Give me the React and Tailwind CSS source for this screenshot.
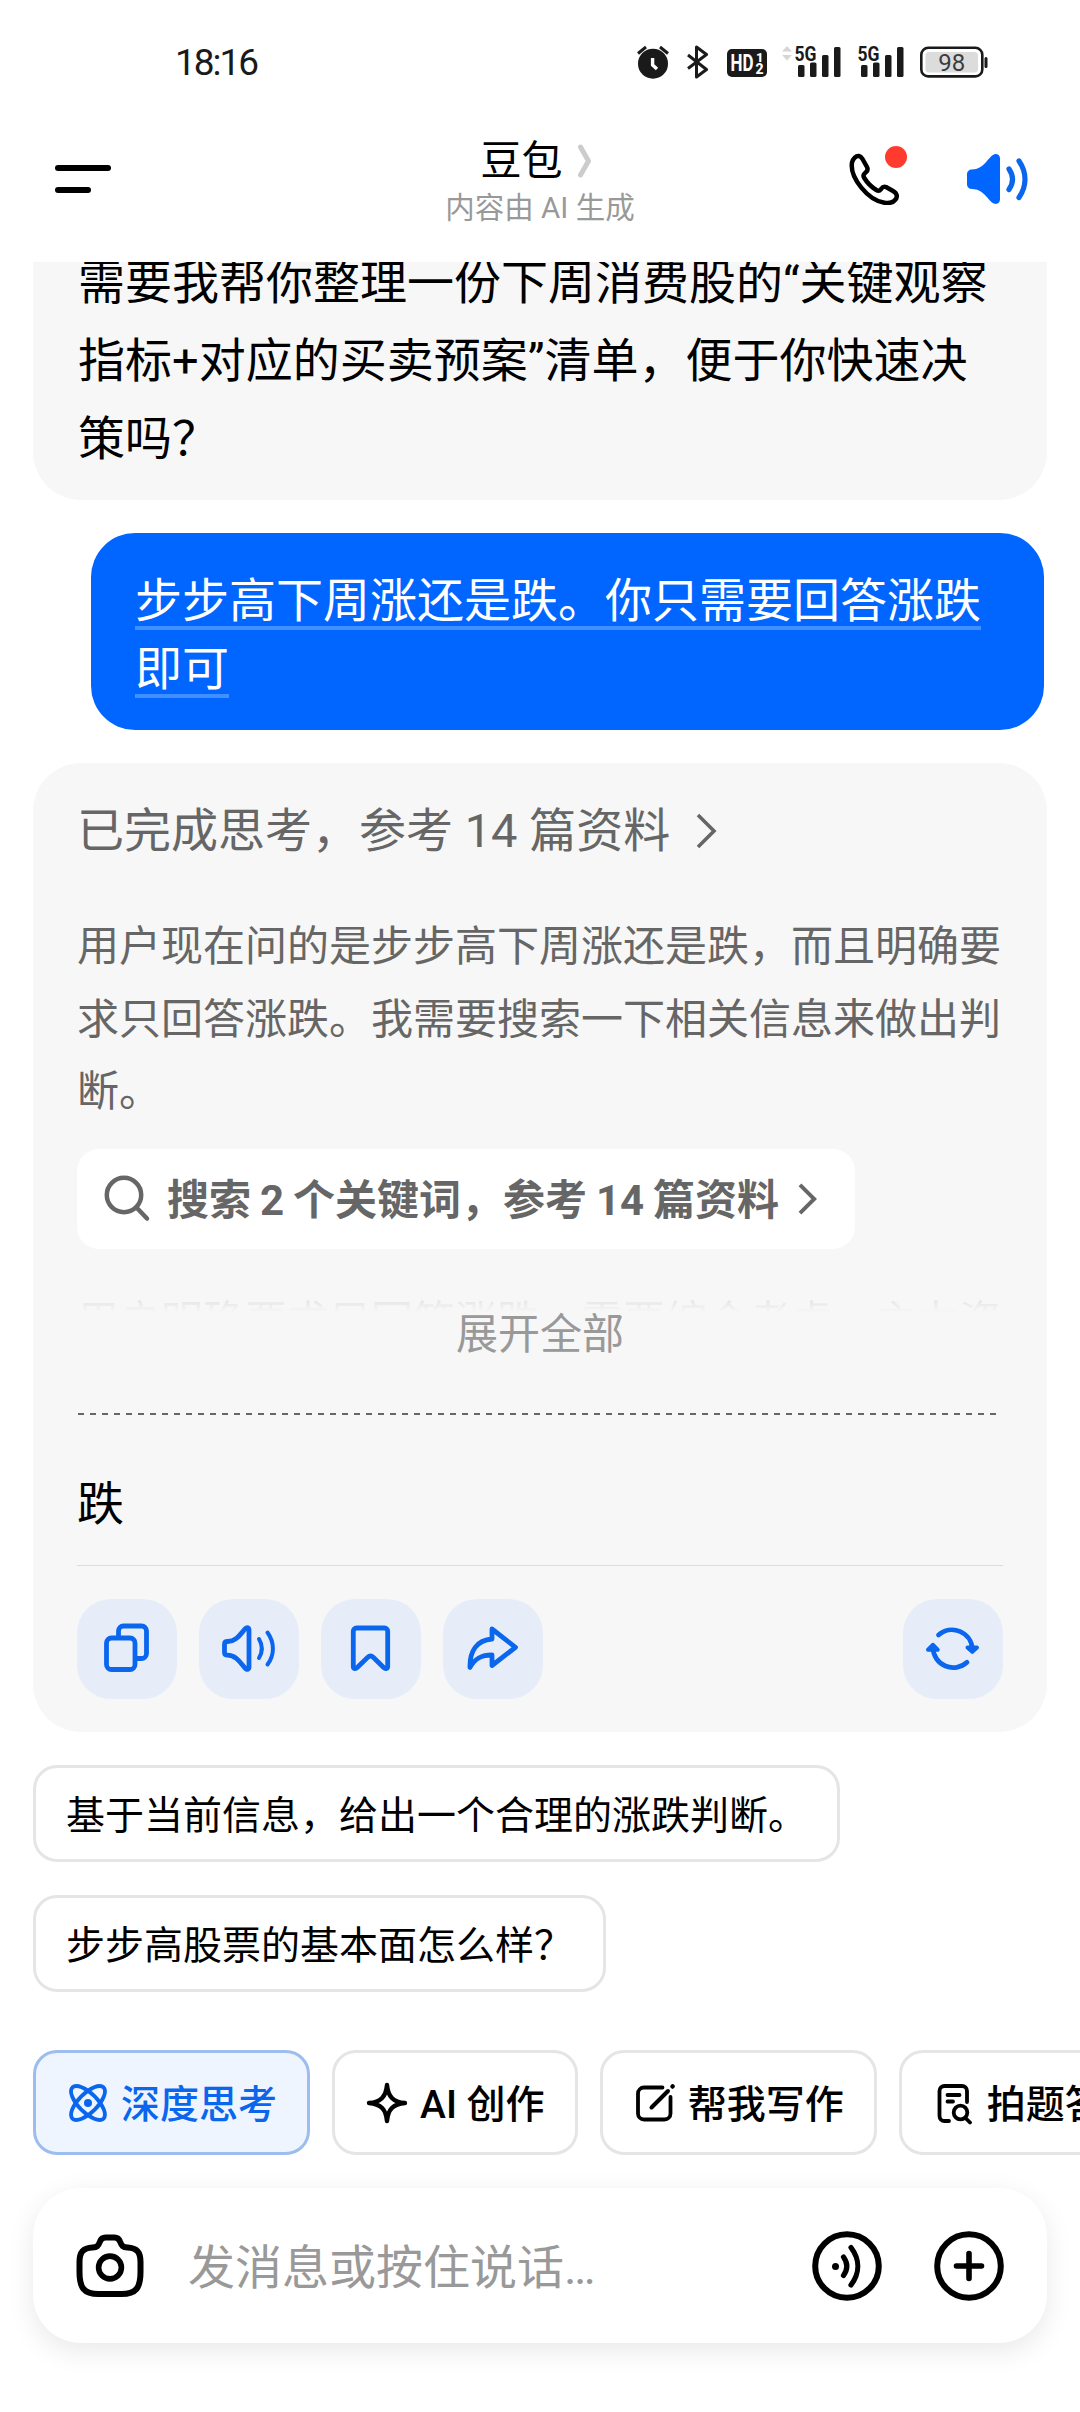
const BLUE = "#0b66ee";

const SignalIcon = () => (
  <svg className="overflow-visible" width="48" height="34" viewBox="0 0 48 34" fill="#1a1a1a">
    <text x="0.5" y="16" fontSize="21" fontWeight="700" textLength="22" lengthAdjust="spacingAndGlyphs">
      5G
    </text>
    <rect x="4" y="20" width="6.5" height="12" rx="1.5" />
    <rect x="16" y="17.5" width="6.5" height="14.5" rx="1.5" />
    <rect x="28" y="10" width="6.5" height="22" rx="1.5" />
    <rect x="40" y="2" width="6.5" height="30" rx="1.5" />
  </svg>
);

const StatusBar = () => (
  <div className="flex h-[124px] shrink-0 items-center justify-between pr-[92px] pl-[175px] text-[#1a1a1a]">
    <span className="text-[37px] leading-none tracking-[-2px]">18:16</span>
    <div className="flex items-center">
      {/* alarm */}
      <svg width="32" height="34" viewBox="0 0 32 34" fill="none" stroke="#1a1a1a" strokeWidth="3">
        <circle cx="16" cy="18.7" r="15" fill="#1a1a1a" stroke="none" />
        <path d="M1 8.5l8-6.5M31 8.5L23 2" />
        <path d="M15.6 13v7l4.4 4" stroke="#fff" strokeWidth="3.4" />
      </svg>
      {/* bluetooth */}
      <svg className="ml-[17px]" width="24" height="34" viewBox="0 0 24 34" fill="none" stroke="#1a1a1a" strokeWidth="3" strokeLinejoin="round">
        <path d="M2 10l18.5 14.5L10.5 32V2l10 7.5L2 23.5" />
      </svg>
      {/* HD voice */}
      <svg className="ml-[17px]" width="40" height="34" viewBox="0 0 40 34" fill="#fff">
        <rect x="0" y="4" width="40" height="28" rx="5" fill="#1a1a1a" />
        <text x="3.5" y="26" fontSize="23" fontWeight="700" textLength="23" lengthAdjust="spacingAndGlyphs">HD</text>
        <text x="29" y="17" fontSize="13" fontWeight="800">1</text>
        <text x="28.5" y="29" fontSize="14" fontWeight="800">2</text>
      </svg>
      <svg className="ml-[15px]" width="10" height="34" viewBox="0 0 10 34" fill="#d6d6d6">
        <path d="M0 6.5L5 1l5 5.5zM0 10l5 5.5 5-5.5z" />
      </svg>
      <div className="ml-[2px] flex gap-[15px]">
        <SignalIcon />
        <SignalIcon />
      </div>
      {/* battery */}
      <svg className="ml-[15px]" width="68" height="34" viewBox="0 0 68 34">
        <rect x="1.3" y="2.8" width="61" height="28.6" rx="7" fill="none" stroke="#1a1a1a" strokeWidth="2.6" />
        <rect x="5.5" y="7" width="52.5" height="20.5" rx="3.5" fill="#dcdcdc" />
        <rect x="64.5" y="12" width="3" height="11" rx="1.5" fill="#1a1a1a" />
        <text x="31.7" y="26" fontSize="24" textAnchor="middle" fill="#3c3c3c">98</text>
      </svg>
    </div>
  </div>
);

const Header = () => (
  <header className="grid h-[138px] shrink-0 grid-cols-[1fr_auto_1fr] items-start px-[50px]">
    <div className="flex flex-col gap-4 pt-[41px] pl-[5px]">
      <span className="h-[6px] w-14 rounded-full bg-black" />
      <span className="h-[6px] w-9 rounded-full bg-black" />
    </div>
    <div className="flex flex-col items-center pt-3">
      <div className="flex items-center gap-3.5 pr-[7px] text-[41px] leading-[50px] text-black">
        豆包
        <svg width="16" height="34" viewBox="0 0 16 34" fill="none" stroke="#cccccc" strokeWidth="5" strokeLinecap="round" strokeLinejoin="round">
          <path d="M3.5 3l8 14-8 14" />
        </svg>
      </div>
      <p className="text-[29.5px] leading-[44px] text-[#999999]">内容由 AI 生成</p>
    </div>
    <div className="flex items-start justify-end gap-[66px] pt-[26px]">
      <div className="relative pt-[3px]">
        <svg width="52" height="52" viewBox="0 0 52 52" fill="none" stroke="#000" strokeWidth="4.5" strokeLinejoin="round">
          <path d="M4 9.500C5 5.500 8 2.500 11 3c1.500.3 2.500 1.500 3.500 3l4.500 8c1.200 2.300.5 3.800-1 5.200-2.700 2.500-3.200 3.300-1.700 5.800 3 5 8 9.500 12 12 2.300 1.400 3.200 1 4.500-.7 1.600-2.100 2.700-3.300 5.200-2.300l7 4c4.500 2.600 4.500 6 2.500 8.500-2.300 3-6.500 4-11 3.300C20.500 47.500 1.500 25 4 9.500z" />
        </svg>
        <span className="absolute -top-[4px] left-[37px] size-[22px] rounded-full bg-[#ff3b30]" />
      </div>
      <svg className="mt-[3px]" width="64" height="52" viewBox="0 0 64 52" fill="none">
        <path d="M6 16.500C18 16.500 22 4 28 1.500c3-1.200 6 .5 6 4v41c0 3.500-3 5.200-6 4C22 48 18 36 6 36c-3 0-5-2-5-4.500v-10c0-3 2-5 5-5z" fill="#0066ff" />
        <path d="M43 16c4.500 6.500 4.500 14 0 20.500M53 8c8 11.500 8 25 0 36.500" stroke="#0b66ee" strokeWidth="5.2" strokeLinecap="round" />
      </svg>
    </div>
  </header>
);

const Chevron = ({ className, width = 3.6 }) => (
  <svg className={className} width="22" height="36" viewBox="0 0 22 36" fill="none" stroke="#666666" strokeWidth={width}>
    <path d="M2 2l16 16L2 34" />
  </svg>
);

const actionIcons = {
  copy: (
    <>
      <path d="M41.5 37v-5a5 5 0 0 1 5-5h18a5 5 0 0 1 5 5v22.500a5 5 0 0 1-5 5H60" />
      <rect x="29.5" y="39" width="28.5" height="31.5" rx="5" />
    </>
  ),
  speaker: (
    <>
      <path d="M28.5 42.500C38 42.500 42 34 46.500 29.500c1.500-1.500 3.500-.8 3.500 1.500v37c0 2.300-2 3-3.500 1.500C42 65 38 56.200 28.500 56.200c-2 0-3-1-3-3v-7.700c0-2 1-3 3-3z" />
      <path d="M60 40c3.600 6 3.600 13 0 19M68.500 33.500c7.200 10 7.200 22.500 0 32" strokeWidth="4" />
    </>
  ),
  bookmark: (
    <path d="M35.5 29h28a3.200 3.200 0 0 1 3.200 3.200v35c0 2.600-2.200 3.200-3.800 1.500L52.500 58.500q-3-2.800-6 0L36 68.700c-1.600 1.700-3.700 1.100-3.700-1.500v-35a3.200 3.200 0 0 1 3.200-3.200z" />
  ),
  share: (
    <path d="M27 68.500C26.500 52 34 41 49 40V30l23.500 18.300L49 66.500V56c-10 0-17 3-22 12.500z" />
  ),
  refresh: (
    <>
      <path d="M35.5 36A20.300 20.300 0 0 1 69.300 50M64 63.300A20.300 20.300 0 0 1 30 49" />
      <path d="M64.500 48.500l4.800 4.400 4.700-4.400zM25 50.700l5-4.900 4.700 4.900z" fill={BLUE} strokeWidth="4" />
    </>
  ),
};

const ActionButton = ({ name }) => (
  <button className="size-[100px] rounded-[34px] bg-[#e6edf8]">
    <svg width="100" height="100" viewBox="0 0 100 100" fill="none" stroke={BLUE} strokeWidth="4.8" strokeLinecap="round" strokeLinejoin="round">
      {actionIcons[name]}
    </svg>
  </button>
);

const AnswerCard = () => (
  <section className="mx-[33px] mt-[33px] h-[969px] rounded-[48px] bg-[#f7f7f7] px-11 pt-[33px]">
    <div className="flex h-[70px] items-center text-[47px] whitespace-nowrap text-[#666666]">
      已完成思考，参考 14 篇资料
      <Chevron className="ml-[26px]" />
    </div>
    <p className="mt-[45px] text-[42px] leading-[72.5px] whitespace-nowrap text-[#666666]">
      用户现在问的是步步高下周涨还是跌，而且明确要
      <br />
      求只回答涨跌。我需要搜索一下相关信息来做出判
      <br />
      断。
    </p>
    <div className="mt-5 flex h-[100px] w-[778px] items-center rounded-[22px] bg-white pl-[27px] text-[42px] font-bold whitespace-nowrap text-[#666666]">
      <svg className="mr-4" width="47" height="47" viewBox="0 0 47 47" fill="none" stroke="#666666" strokeWidth="4.5" strokeLinecap="round">
        <circle cx="20" cy="20" r="17.2" />
        <path d="M32.5 32.500L43 43.500" />
      </svg>
      <span className="pt-1 [word-spacing:-1.5px]">搜索 2 个关键词，参考 14 篇资料</span>
      <Chevron className="ml-[18px] h-8" width={4.4} />
    </div>
    {/* next paragraph, faded out under the expand button */}
    <div className="mt-[39px] h-6 overflow-hidden bg-gradient-to-b from-[#d4d4d4] to-[#f7f7f7] bg-clip-text text-[42px] leading-[67px] whitespace-nowrap text-transparent">
      用户明确要求只回答涨跌，需要综合考虑，主力资
    </div>
    <button className="block h-[42px] w-full pt-0.5 text-center text-[42px] leading-[42px] text-[#999999]">展开全部</button>
    <div className="mt-[59px] ml-px h-[2px] w-[919px] bg-[repeating-linear-gradient(90deg,#666_0_6px,transparent_6px_12px)]" />
    <p className="mt-[50px] text-[47px] leading-[78px] text-black">跌</p>
    <div className="mt-[22px] h-px bg-[#dddddd]" />
    <div className="mt-[33px] flex gap-[22px]">
      <ActionButton name="copy" />
      <ActionButton name="speaker" />
      <ActionButton name="bookmark" />
      <ActionButton name="share" />
      <div className="ml-auto">
        <ActionButton name="refresh" />
      </div>
    </div>
  </section>
);

const suggestions = ["基于当前信息，给出一个合理的涨跌判断。", "步步高股票的基本面怎么样？"];

const tools = [
  {
    label: "深度思考",
    active: true,
    icon: (
      <g fill="none" stroke={BLUE} strokeWidth="3.8">
        <ellipse cx="22" cy="22" rx="9.5" ry="22" transform="rotate(45 22 22)" />
        <ellipse cx="22" cy="22" rx="9.5" ry="22" transform="rotate(-45 22 22)" />
        <circle cx="22" cy="22" r="4" fill={BLUE} stroke="none" />
      </g>
    ),
  },
  {
    label: "AI 创作",
    icon: (
      <path d="M22 4c1 11.500 6 17 18 18-12 1-17 6.500-18 18-1-11.500-6-17-18-18 12-1 17-6.500 18-18z" fill="none" stroke="#000" strokeWidth="4.4" strokeLinejoin="round" />
    ),
  },
  {
    label: "帮我写作",
    icon: (
      <g fill="none" stroke="#000" strokeWidth="3.8" strokeLinecap="round">
        <path d="M29.5 6.500H11a6 6 0 0 0-6 6V32.500a6 6 0 0 0 6 6h20.500a6 6 0 0 0 6-6V16" />
        <path d="M18.5 26.500L35 10" strokeWidth="4" />
        <path d="M39.500 5.500l.1-.1" strokeWidth="4.5" />
      </g>
    ),
  },
  {
    label: "拍题答疑",
    icon: (
      <g fill="none" stroke="#000" strokeWidth="3.8" strokeLinecap="round">
        <path d="M17 40h-4.500a5 5 0 0 1-5-5V10a5 5 0 0 1 5-5H30a5 5 0 0 1 5 5v11" />
        <path d="M15.500 14h12M15.500 20.500h5.500" />
        <circle cx="28.5" cy="31.5" r="6.800" />
        <path d="M33.500 37l4.500 4.500" />
      </g>
    ),
  },
];

const Composer = () => (
  <div className="mx-[33px] mt-[33px] flex h-[155px] shrink-0 items-center rounded-[48px] bg-white px-[43px] shadow-[0_8px_28px_rgba(0,0,0,0.09)]">
    <svg width="68" height="64" viewBox="0 0 68 64" fill="none" stroke="#000" strokeWidth="6">
      <path d="M24 7.500C25 4.500 27 3.500 29.500 3.500h9C41 3.500 43 4.500 44 7.500c1.700 4.500 3 5.700 7.500 6C61 14 64.500 18 64.500 28v10c0 16-4.500 22-19 22h-23c-14.500 0-19-6-19-22V28c0-10 3.500-14 13-14.500 4.500-.3 5.800-1.500 7.500-6z" />
      <circle cx="34" cy="33.5" r="11.4" strokeWidth="5.6" />
    </svg>
    <span className="ml-[44px] flex-1 pt-[5px] text-[47px] text-[#999999]">发消息或按住说话…</span>
    <svg width="70" height="70" viewBox="0 0 70 70" fill="none" stroke="#000" strokeWidth="5.2" strokeLinecap="round">
      <circle cx="35" cy="35" r="31.8" strokeWidth="6" />
      <circle cx="23.5" cy="35.5" r="3.5" fill="#000" stroke="none" />
      <path d="M31.5 26c4.300 6 4.300 12.500 0 18.500M39 16.500c9 12 9 25.500 0 37.500" />
    </svg>
    <svg className="ml-[52px]" width="70" height="70" viewBox="0 0 70 70" fill="none" stroke="#000" strokeWidth="5.6" strokeLinecap="round">
      <circle cx="35" cy="35" r="31.8" strokeWidth="6" />
      <path d="M35 22.500v25M22.500 35h25" />
    </svg>
  </div>
);

export default function App() {
  return (
    <div className="flex h-[2412px] w-[1080px] flex-col overflow-hidden bg-white font-['Roboto','Noto_Sans_CJK_SC',sans-serif]">
      <StatusBar />
      <Header />

      <main className="h-[1752px] shrink-0 overflow-hidden">
        <section className="mx-[33px] flex h-[238px] items-end overflow-hidden rounded-b-[48px] bg-[#f7f7f7] px-[45px] pb-[22px]">
          <p className="text-[47px] leading-[78px] whitespace-nowrap text-black">
            需要我帮你整理一份下周消费股的“关键观察
            <br />
            指标+对应的买卖预案”清单，便于你快速决
            <br />
            策吗？
          </p>
        </section>

        <div className="mt-[33px] ml-[91px] h-[197px] w-[953px] rounded-[44px] bg-[#0066ff] px-11 pt-[34px] text-[47px] leading-[68px] whitespace-nowrap text-white underline decoration-[#4090ff] decoration-[4px] underline-offset-[9px]">
          步步高下周涨还是跌。你只需要回答涨跌
          <br />
          即可
        </div>

        <AnswerCard />

        <div className="mt-[33px] flex flex-col items-start gap-[33px] pl-[33px]">
          {suggestions.map((text) => (
            <button
              key={text}
              className="h-[97px] rounded-[24px] border-[3px] border-[#e5e5e5] px-[30px] pt-[5px] text-[39px] leading-none whitespace-nowrap text-black"
            >
              {text}
            </button>
          ))}
        </div>
      </main>

      <div className="mt-[36px] flex h-[105px] shrink-0 gap-[22px] overflow-hidden pl-[33px]">
        {tools.map((tool) => (
          <button
            key={tool.label}
            className={
              "flex shrink-0 items-center gap-[11px] rounded-[24px] border-[3px] px-[30px] text-[39px] leading-none font-medium whitespace-nowrap " +
              (tool.active ? "border-[#9cbdee] bg-[#eef5ff] text-[#0b66ee]" : "border-[#e5e5e5] text-black")
            }
          >
            <svg width="44" height="44" viewBox="0 0 44 44">
              {tool.icon}
            </svg>
            <span className="pt-[5px]">{tool.label}</span>
          </button>
        ))}
      </div>

      <Composer />
    </div>
  );
}
